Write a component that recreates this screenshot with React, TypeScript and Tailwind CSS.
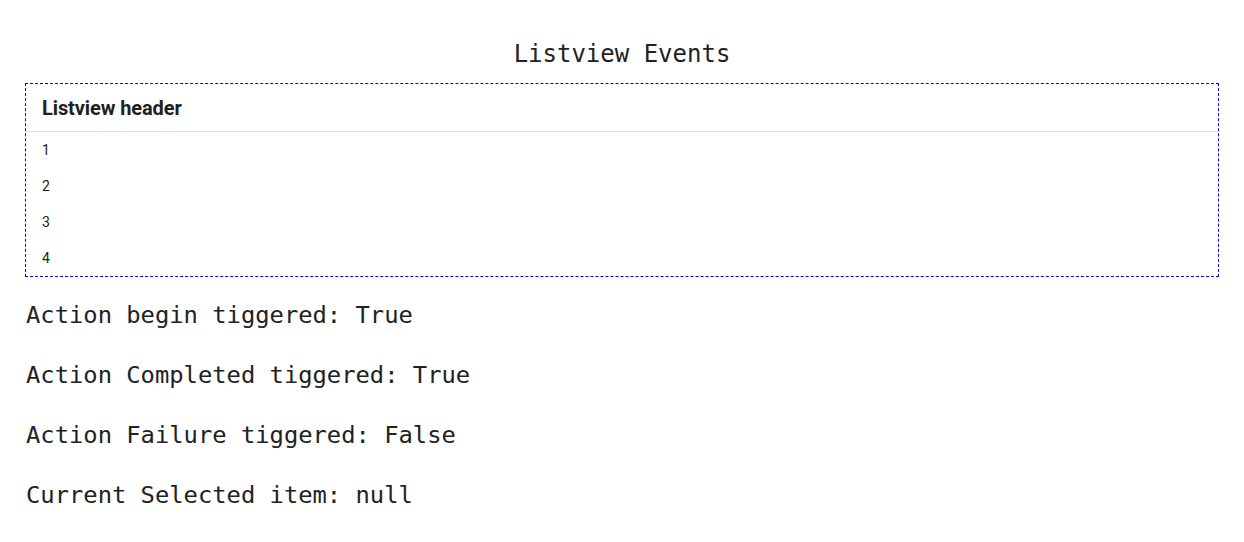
const items = ["1", "2", "3", "4"];

const events = [
  "Action begin tiggered: True",
  "Action Completed tiggered: True",
  "Action Failure tiggered: False",
  "Current Selected item: null",
];

export default function App() {
  return (
    <main className="min-h-screen w-full bg-white px-[25px] pt-[38px] text-[#212121]">
      <h1 className="text-center font-['DejaVu_Sans_Mono',monospace] text-[24px] leading-[32px] font-normal text-[#222]">
        Listview Events
      </h1>

      <div className="mt-[13px] border border-dashed border-[#0000ff]">
        <div className="flex h-[48px] items-center border-b border-[#e0e0e0] px-4">
          <span className="font-['Roboto',sans-serif] text-[20px] font-bold tracking-[-0.1px] text-[#212121]">
            Listview header
          </span>
        </div>
        <ul>
          {items.map((item) => (
            <li
              key={item}
              className="flex h-[36px] items-center px-4 font-['Roboto',sans-serif] text-[14px] text-[#212121]"
            >
              {item}
            </li>
          ))}
        </ul>
      </div>

      <div className="pt-[20px] font-['DejaVu_Sans_Mono',monospace] text-[23.8px] text-[#222]">
        {events.map((line) => (
          <p key={line} className="mb-[24px] pl-px leading-[36px]">
            {line}
          </p>
        ))}
      </div>
    </main>
  );
}
